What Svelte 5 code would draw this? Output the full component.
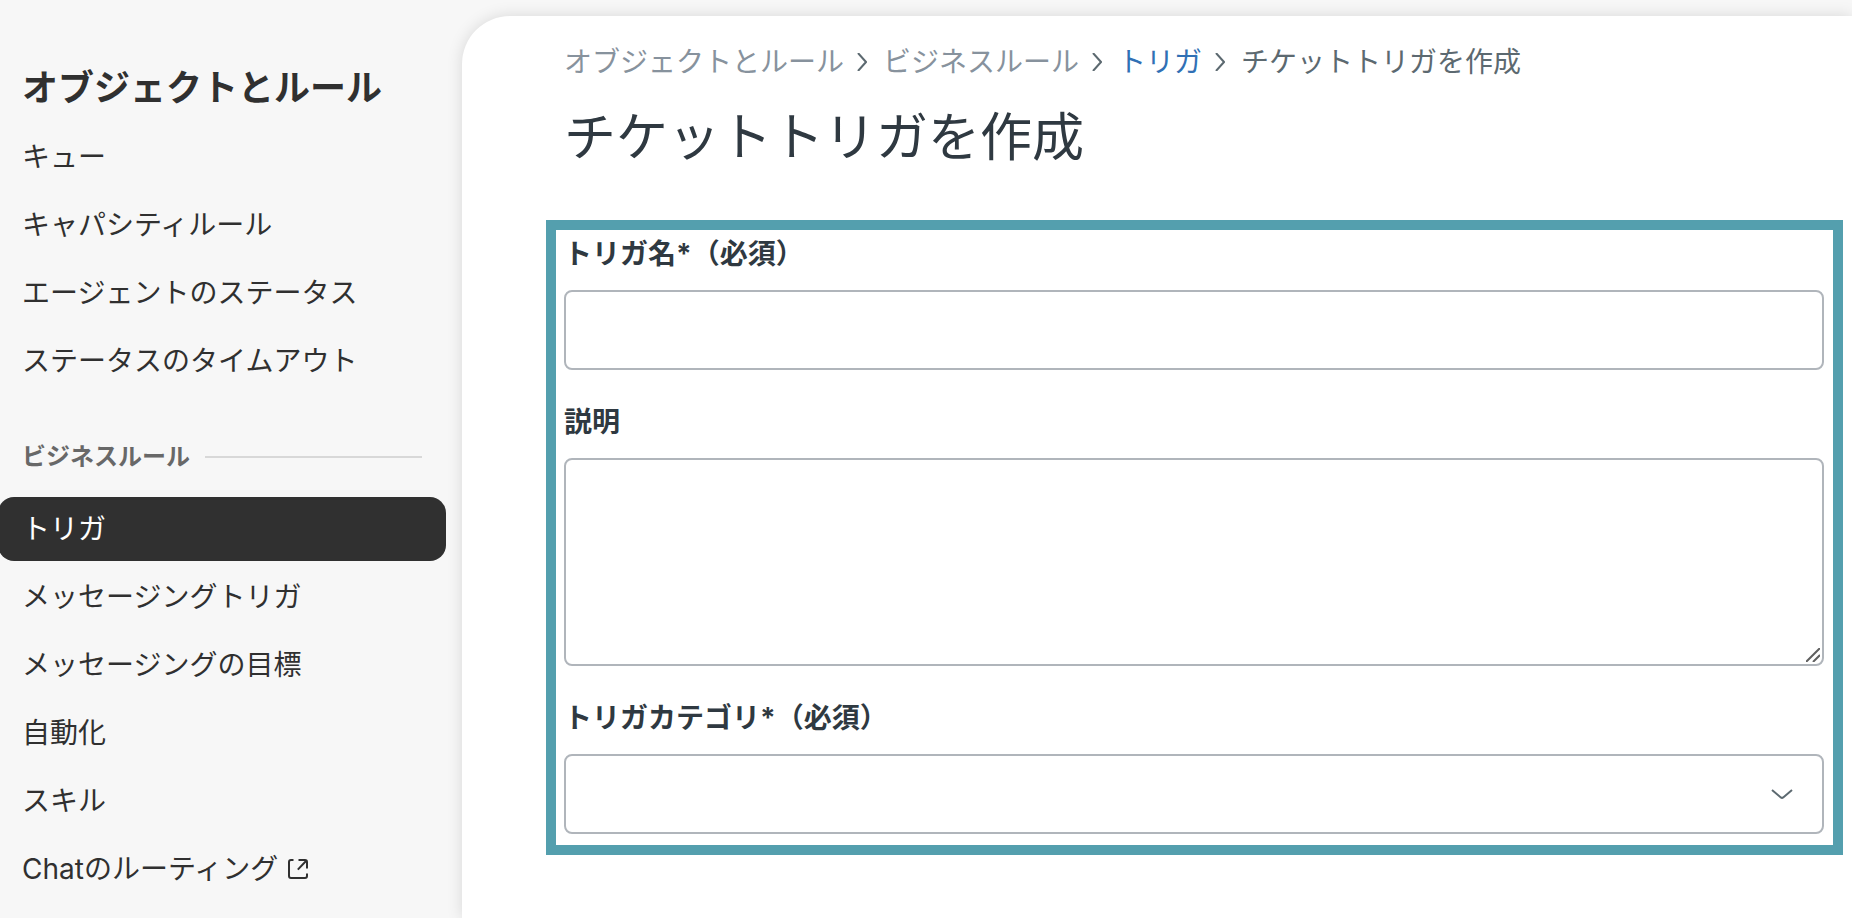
<script lang="ts">
  type NavItem = { label: string; external?: boolean };

  const routingItems: NavItem[] = [
    { label: "キュー" },
    { label: "キャパシティルール" },
    { label: "エージェントのステータス" },
    { label: "ステータスのタイムアウト" },
  ];

  const ruleItems: NavItem[] = [
    { label: "トリガ" },
    { label: "メッセージングトリガ" },
    { label: "メッセージングの目標" },
    { label: "自動化" },
    { label: "スキル" },
    { label: "Chatのルーティング", external: true },
  ];

  let current = $state("トリガ");
  let name = $state("");
  let description = $state("");
  let category = $state("");
</script>

{#snippet navList(items: NavItem[])}
  <ul>
    {#each items as item}
      <li>
        <a
          href="#top"
          class="nav-link"
          class:active={item.label === current}
          onclick={() => (current = item.label)}
        >
          {item.label}
          {#if item.external}
            <svg class="external" viewBox="0 0 20 20" aria-hidden="true">
              <path d="M5.5 1H3a2 2 0 0 0-2 2v14a2 2 0 0 0 2 2h14a2 2 0 0 0 2-2v-2.5" />
              <path d="M10.5 1H17a2 2 0 0 1 2 2v6.5M18.5 1.5L9.8 10.6" />
            </svg>
          {/if}
        </a>
      </li>
    {/each}
  </ul>
{/snippet}

{#snippet separator()}
  <svg class="separator" viewBox="0 0 10 18" aria-hidden="true">
    <path d="M1 0l8 9-8 9" />
  </svg>
{/snippet}

<div class="layout">
  <nav class="sidebar">
    <h2>オブジェクトとルール</h2>
    {@render navList(routingItems)}
    <h3>ビジネスルール</h3>
    {@render navList(ruleItems)}
  </nav>

  <main>
    <div class="breadcrumb">
      <span class="muted">オブジェクトとルール</span>
      {@render separator()}
      <span class="muted">ビジネスルール</span>
      {@render separator()}
      <a href="#top">トリガ</a>
      {@render separator()}
      <span>チケットトリガを作成</span>
    </div>

    <h1>チケットトリガを作成</h1>

    <form class="highlight">
      <div class="field">
        <label for="trigger-name">トリガ名*（必須）</label>
        <input id="trigger-name" type="text" bind:value={name} />
      </div>

      <div class="field">
        <label for="description">説明</label>
        <div class="control">
          <textarea id="description" bind:value={description}></textarea>
          <svg class="grip" viewBox="0 0 14 14" aria-hidden="true">
            <path d="M0 14L14 0M7 14l7-7" />
          </svg>
        </div>
      </div>

      <div class="field">
        <label for="category">トリガカテゴリ*（必須）</label>
        <div class="control">
          <select id="category" bind:value={category}>
            <option value=""></option>
          </select>
          <svg class="chevron" viewBox="0 0 22 12" aria-hidden="true">
            <path d="M1 2l8.8 7.4a2 2 0 0 0 2.4 0L21 2" />
          </svg>
        </div>
      </div>
    </form>
  </main>
</div>

<style>
  :global(body) {
    background: #f7f7f7;
    font-family: Inter, "Noto Sans CJK JP", sans-serif;
  }

  .layout {
    display: flex;
    min-height: 100vh;
    padding-top: 16px;
    box-sizing: border-box;
    overflow: hidden;
    font-size: 28px;
    line-height: 40px;
  }

  .sidebar {
    flex: 0 0 446px;
    margin-right: 16px;
    padding-top: 48px;
    color: #303030;
  }

  h2 {
    margin: 0 0 13px;
    padding-left: 22px;
    font-size: 36px;
    line-height: 48px;
    font-weight: 700;
  }

  h3 {
    display: flex;
    align-items: center;
    gap: 15px;
    margin: 46px 24px 22px 22px;
    font-size: 24px;
    line-height: 36px;
    font-weight: 700;
    color: #686868;
  }

  h3::after {
    content: "";
    flex: 1;
    height: 2px;
    background: #d8d8d8;
  }

  ul {
    display: flex;
    flex-direction: column;
    gap: 4px;
    margin: 0;
    padding: 0;
    list-style: none;
  }

  .nav-link {
    display: flex;
    align-items: center;
    gap: 10px;
    height: 64px;
    margin-left: -2px;
    padding: 0 24px;
    box-sizing: border-box;
    border-radius: 16px;
    color: inherit;
    text-decoration: none;
  }

  .nav-link.active {
    background: #303030;
    color: #fff;
  }

  svg {
    fill: none;
    stroke: currentColor;
    stroke-width: 2;
  }

  .external {
    width: 20px;
    height: 20px;
  }

  main {
    flex: 1;
    min-width: 0;
    padding: 26px 9px 63px 84px;
    border-radius: 48px 0 0 0;
    background: #fff;
    box-shadow: 0 0 16px rgba(0, 0, 0, 0.13);
    color: #2f3941;
  }

  .breadcrumb {
    display: flex;
    align-items: center;
    padding-left: 18px;
    color: #5c6970;
  }

  .breadcrumb .muted {
    color: #87929d;
  }

  .breadcrumb a {
    color: #3070b5;
    text-decoration: none;
  }

  .separator {
    width: 10px;
    height: 18px;
    margin: 0 16px 0 13px;
  }

  h1 {
    margin: 24px 0 50px 18px;
    font-size: 52px;
    line-height: 64px;
    font-weight: 400;
  }

  .highlight {
    display: flex;
    flex-direction: column;
    gap: 32px;
    padding: 4px 9px 11px 8px;
    border: 10px solid #549fae;
  }

  .field {
    display: flex;
    flex-direction: column;
    gap: 16px;
  }

  label {
    font-weight: 700;
  }

  .control {
    position: relative;
    display: flex;
  }

  input,
  textarea,
  select {
    width: 100%;
    height: 80px;
    margin: 0;
    padding: 0 22px;
    box-sizing: border-box;
    border: 2px solid #b0b5bb;
    border-radius: 8px;
    background: #fff;
    color: inherit;
    font: inherit;
    appearance: none;
  }

  textarea {
    height: 208px;
    padding: 18px 22px;
    resize: vertical;
  }

  textarea::-webkit-resizer {
    display: none;
  }

  .grip {
    position: absolute;
    right: 4px;
    bottom: 4px;
    width: 14px;
    height: 14px;
    color: #5f5f5f;
    pointer-events: none;
  }

  .chevron {
    position: absolute;
    top: 34px;
    right: 31px;
    width: 22px;
    height: 12px;
    color: #5c6970;
    pointer-events: none;
  }
</style>
